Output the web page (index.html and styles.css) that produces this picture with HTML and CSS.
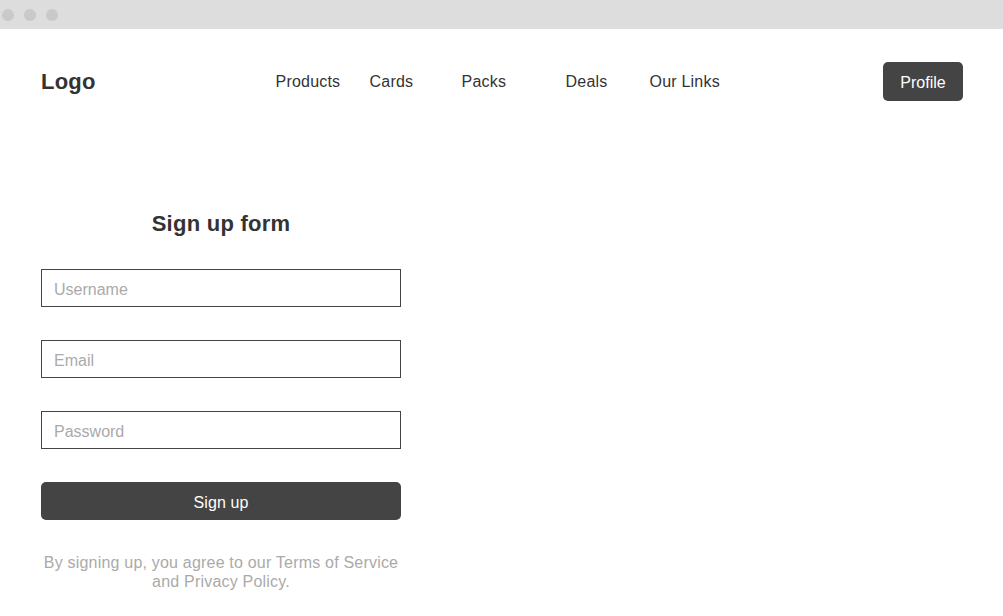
FILE: index.html
```html
<!DOCTYPE html>
<html lang="en">
<head>
<meta charset="utf-8">
<title>Sign up</title>
<link rel="stylesheet" href="styles.css">
</head>
<body>
<div class="chrome">
  <span class="dot"></span><span class="dot"></span><span class="dot"></span>
</div>
<header class="header">
  <div class="logo">Logo</div>
  <nav class="nav">
    <a class="nav-item w-products" href="#">Products</a>
    <a class="nav-item w-cards" href="#">Cards</a>
    <a class="nav-item w-packs" href="#">Packs</a>
    <a class="nav-item w-deals" href="#">Deals</a>
    <a class="nav-item" href="#">Our Links</a>
  </nav>
  <button class="profile" type="button">Profile</button>
</header>
<main class="main">
  <form class="form">
    <h1 class="title">Sign up form</h1>
    <input class="field" type="text" placeholder="Username">
    <input class="field" type="email" placeholder="Email">
    <input class="field" type="password" placeholder="Password">
    <button class="submit" type="button">Sign up</button>
    <p class="terms">By signing up, you agree to our Terms of Service and Privacy Policy.</p>
  </form>
</main>
</body>
</html>
```
FILE: styles.css
```css
* { box-sizing: border-box; }
html, body { margin: 0; padding: 0; background: #fff; }
body {
  font-family: "Liberation Sans", Arial, sans-serif;
  font-size: 16px;
  color: #333;
}
.chrome {
  height: 29px;
  background: #dddddd;
  display: flex;
  align-items: center;
  gap: 10px;
  padding-left: 2px;
  padding-top: 1px;
}
.dot {
  width: 12px;
  height: 12px;
  border-radius: 50%;
  background: #c9c9c9;
}
.header {
  display: flex;
  align-items: center;
  padding: 33px 40px 0 41px;
}
.logo {
  font-size: 22px;
  font-weight: bold;
  color: #333;
  letter-spacing: 0.2px;
}
.nav {
  display: flex;
  margin-left: 180px;
}
.nav-item {
  color: #333;
  text-decoration: none;
  font-size: 16px;
  letter-spacing: 0.2px;
}
.w-products { width: 94px; }
.w-cards { width: 92px; }
.w-packs { width: 104px; }
.w-deals { width: 84px; }
.profile {
  margin-left: auto;
  width: 80px;
  height: 39px;
  border: none;
  border-radius: 5px;
  background: #444;
  color: #fff;
  font-family: inherit;
  font-size: 16px;
  padding: 2px 0 0;
}
.main {
  padding: 110px 0 0 41px;
}
.form {
  width: 360px;
  display: flex;
  flex-direction: column;
  gap: 33px;
}
.title {
  margin: 0 0 -1px;
  font-size: 22px;
  font-weight: bold;
  text-align: center;
  color: #333;
  letter-spacing: 0.25px;
}
.field {
  height: 38px;
  border: 1px solid #444;
  border-radius: 0;
  padding: 4px 12px 0;
  font-family: inherit;
  font-size: 16px;
  color: #333;
  outline: none;
}
.field::placeholder { color: #aaa; }
.submit {
  height: 38px;
  border: none;
  border-radius: 5px;
  background: #444;
  color: #fff;
  font-family: inherit;
  font-size: 16px;
  padding: 3px 0 0;
  letter-spacing: 0.1px;
}
.terms {
  margin: 0;
  color: #aaa;
  text-align: center;
  line-height: 19px;
  letter-spacing: 0.2px;
}
```
